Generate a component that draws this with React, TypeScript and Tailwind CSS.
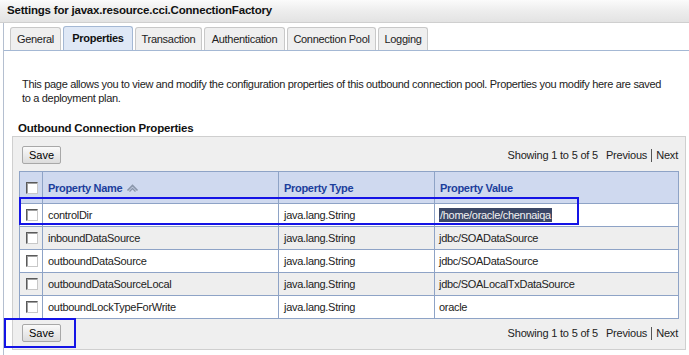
import React from 'react';

const TABS = [
  { label: 'General', w: 'w-[51px]' },
  { label: 'Properties', w: 'w-[70px]' },
  { label: 'Transaction', w: 'w-[67px]' },
  { label: 'Authentication', w: 'w-[81px]' },
  { label: 'Connection Pool', w: 'w-[89px]' },
  { label: 'Logging', w: 'w-[50px]' },
];

const ROWS = [
  { name: 'controlDir', type: 'java.lang.String', value: '/home/oracle/chennaiqa', selected: true },
  { name: 'inboundDataSource', type: 'java.lang.String', value: 'jdbc/SOADataSource' },
  { name: 'outboundDataSource', type: 'java.lang.String', value: 'jdbc/SOADataSource' },
  { name: 'outboundDataSourceLocal', type: 'java.lang.String', value: 'jdbc/SOALocalTxDataSource' },
  { name: 'outboundLockTypeForWrite', type: 'java.lang.String', value: 'oracle' },
];

function CheckBox() {
  return (
    <span className="block w-[12px] h-[12px] bg-white border border-t-[#5a5a5a] border-l-[#5a5a5a] border-r-[#c8c8c8] border-b-[#c8c8c8] shadow-[inset_1px_1px_0_#a0a0a0]" />
  );
}

function SaveButton() {
  return (
    <button
      type="button"
      className="h-[18px] w-[39px] text-[11px] leading-none text-black border border-[#a8a8a8] rounded-[2px] bg-gradient-to-b from-[#fafafa] to-[#dcdcdc]"
    >
      Save
    </button>
  );
}

function Pager() {
  return (
    <div className="text-[11px] leading-[14px] tracking-[-0.2px] text-[#222] flex items-center">
      <span>Showing 1 to 5 of 5</span>
      <span className="ml-[8px]">Previous</span>
      <span className="mx-[4px] h-[13px] border-l border-[#555]" />
      <span>Next</span>
    </div>
  );
}

function SortIcon() {
  return (
    <svg width="13" height="8" viewBox="0 0 13 8" className="ml-[4px]">
      <path d="M1.5 6.5 L6.5 1.5 L11.5 6.5" fill="none" stroke="#8a96aa" strokeWidth="1.6" />
      <path d="M3.5 7.5 L6.5 4.5 L9.5 7.5" fill="none" stroke="#8a96aa" strokeWidth="1.4" />
    </svg>
  );
}

const cell = 'border border-[#8ea3c6] p-0 h-[23px]';
const head = 'border border-[#8ea3c6] p-0 h-[32px] text-left pl-[5px] text-[#1c3f9c] font-bold';

export default function App() {
  return (
    <div className="relative w-[689px] h-[355px] overflow-hidden bg-white font-['Liberation_Sans',Arial,sans-serif] text-[#222]">
      <div className="h-[23px] pl-[7px] flex items-center bg-gradient-to-b from-[#fbfbfb] via-[#ededed] to-[#e3e3e3] border-b border-[#cfcfcf]">
        <span className="text-[11.5px] font-bold text-[#111] tracking-[-0.2px]">Settings for javax.resource.cci.ConnectionFactory</span>
      </div>

      <div className="ml-[3px] border-l border-[#b4bfd0] h-[332px]">
        <div className="pt-[4px] pl-[6px] flex items-end gap-[2px] border-b border-[#a4b8d4] h-[28px]">
          {TABS.map((tab) => (
            <div
              key={tab.label}
              className={
                tab.label === 'Properties'
                  ? `${tab.w} h-[24px] flex items-center justify-center text-[11px] tracking-[-0.3px] font-bold text-[#111] bg-[#dfe8f6] border border-b-0 border-[#a4b8d4] rounded-t-[3px]`
                  : `${tab.w} h-[23px] flex items-center justify-center text-[11px] tracking-[-0.3px] text-[#222] bg-[#efefef] border border-b-0 border-[#c8c8c8] rounded-t-[3px]`
              }
            >
              {tab.label}
            </div>
          ))}
        </div>

        <p className="mt-[26px] ml-[18px] w-[648px] text-[11px] leading-[14px] tracking-[-0.32px]">
          This page allows you to view and modify the configuration properties of this outbound connection pool. Properties you modify here are saved to a deployment plan.
        </p>

        <h3 className="mt-[16px] ml-[14px] text-[11.5px] leading-[14px] font-bold text-[#111] tracking-[-0.2px]">Outbound Connection Properties</h3>

        <div className="mt-[1px] ml-[8px] w-[674px] h-[214px] bg-[#efefef] border border-[#cfcfcf] pt-[9px] pl-[6px]">
          <div className="flex items-center justify-between pl-[3px] pr-[7px]">
            <SaveButton />
            <Pager />
          </div>

          <table className="mt-[7px] w-[660px] border-collapse text-[11px] leading-[14px] tracking-[-0.3px] table-fixed">
            <colgroup>
              <col className="w-[23px]" />
              <col className="w-[236px]" />
              <col className="w-[156px]" />
              <col />
            </colgroup>
            <thead>
              <tr className="bg-[#cfd9ef]">
                <th className={`${head} pl-[6px]`}>
                  <CheckBox />
                </th>
                <th className={head}>
                  <span className="flex items-center">
                    Property Name
                    <SortIcon />
                  </span>
                </th>
                <th className={head}>Property Type</th>
                <th className={head}>Property Value</th>
              </tr>
            </thead>
            <tbody>
              {ROWS.map((row, i) => (
                <tr key={row.name} className={i % 2 === 1 ? 'bg-[#eeeeee]' : 'bg-white'}>
                  <td className={`${cell} pl-[6px]`}>
                    <CheckBox />
                  </td>
                  <td className={`${cell} pl-[5px]`}>{row.name}</td>
                  <td className={`${cell} pl-[5px]`}>{row.type}</td>
                  <td className={`${cell} pl-[4px]`}>
                    {row.selected ? (
                      <span className="bg-[#3b4766] text-[#f2f2f2] px-[1px] py-[1px]">{row.value}</span>
                    ) : (
                      row.value
                    )}
                  </td>
                </tr>
              ))}
            </tbody>
          </table>

          <div className="mt-[5px] flex items-center justify-between pl-[3px] pr-[7px]">
            <SaveButton />
            <Pager />
          </div>
        </div>
      </div>

      {/* annotation boxes */}
      <div className="absolute left-[19px] top-[197px] w-[560px] h-[28px] border-2 border-[#1414e6]" />
      <div className="absolute left-[4px] top-[318px] w-[72px] h-[30px] border-2 border-[#1414e6]" />
    </div>
  );
}
